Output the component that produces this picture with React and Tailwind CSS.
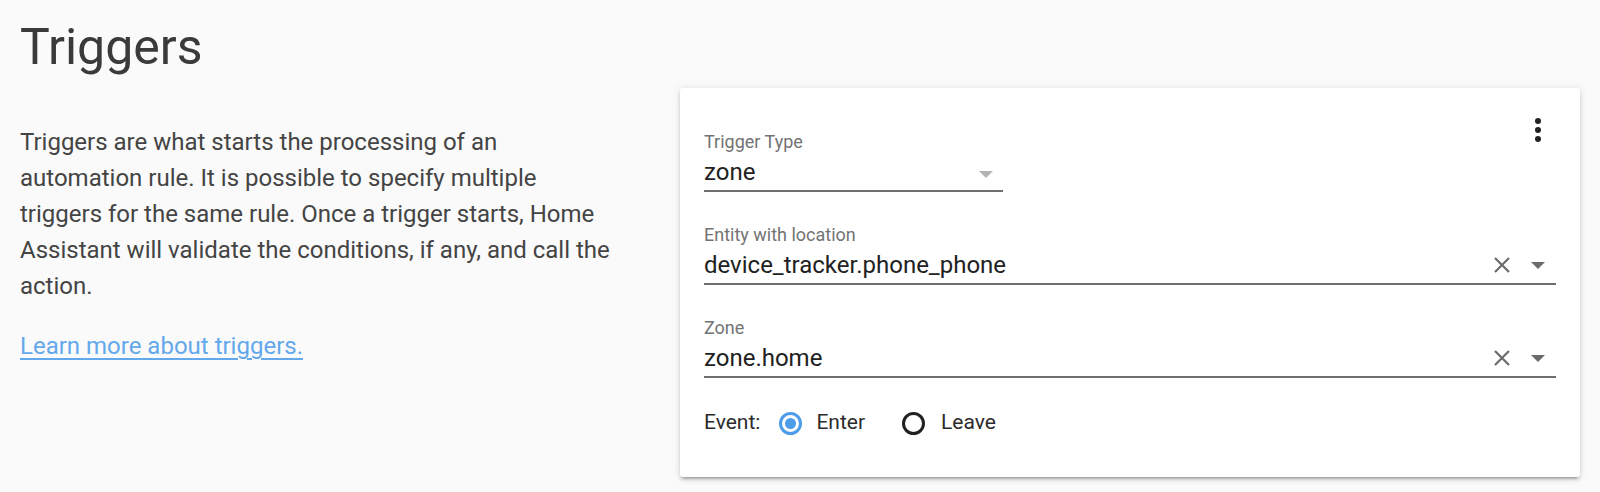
export default function App() {
  return (
    <div className="min-h-[492px] w-[1600px] bg-[#fafafa] font-['Roboto',sans-serif]">
      <div className="px-[20px] pt-[17px]">
        <h1 className="text-[50px] leading-[60px] font-normal text-[#3a3a3a]">Triggers</h1>
        <div className="mt-[11px] flex">
          <div className="w-[600px] mr-[60px] shrink-0 pt-[36px] text-[24px] leading-[36px] text-[#444444]">
            <p>
              Triggers are what starts the processing of an automation rule. It is possible to specify multiple triggers for the same rule. Once a trigger starts, Home Assistant will validate the conditions, if any, and call the action.
            </p>
            <p className="mt-[24px]">
              <a href="#" className="text-[#64a8ec] underline decoration-[1.5px] underline-offset-[4px]">Learn more about triggers.</a>
            </p>
          </div>
          <div className="relative w-[900px] rounded-[3px] bg-white px-[24px] pt-[42px] pb-[36px] shadow-[0_3px_3px_0_rgba(0,0,0,0.14),0_1px_8px_0_rgba(0,0,0,0.12),0_4px_2px_-3px_rgba(0,0,0,0.25)]">
            <button className="absolute right-[24px] top-[24px] flex h-[36px] w-[36px] items-center justify-center">
              <svg viewBox="0 0 36 36" width="36" height="36">
                <circle cx="18" cy="9" r="3" fill="#212121" />
                <circle cx="18" cy="18" r="3" fill="#212121" />
                <circle cx="18" cy="27" r="3" fill="#212121" />
              </svg>
            </button>

            <div className="w-[299px]">
              <div className="text-[18px] leading-[24px] text-[#737373]">Trigger Type</div>
              <div className="flex h-[36px] items-center border-b-2 border-[#6f6f6f] box-content">
                <span className="flex-1 text-[24px] text-[#212121]">zone</span>
                <svg width="14" height="7" viewBox="0 0 14 7" className="mr-[10px] mt-[4px]">
                  <path d="M0 0 L14 0 L7 7 Z" fill="#b3b3b3" />
                </svg>
              </div>
            </div>

            <div className="mt-[31px]">
              <div className="text-[18px] leading-[24px] text-[#737373]">Entity with location</div>
              <div className="flex h-[36px] items-center border-b-2 border-[#6f6f6f] box-content">
                <span className="flex-1 text-[24px] text-[#212121]">device_tracker.phone_phone</span>
                <ClearIcon />
                <ArrowIcon />
              </div>
            </div>

            <div className="mt-[31px]">
              <div className="text-[18px] leading-[24px] text-[#737373]">Zone</div>
              <div className="flex h-[36px] items-center border-b-2 border-[#6f6f6f] box-content">
                <span className="flex-1 text-[24px] text-[#212121]">zone.home</span>
                <ClearIcon />
                <ArrowIcon />
              </div>
            </div>

            <div className="mt-[27px] flex h-[36px] items-center text-[21px] text-[#2b2b2b]">
              <span>Event:</span>
              <div className="ml-[19px] flex items-center">
                <span className="flex h-[23px] w-[23px] items-center justify-center rounded-full border-[3px] border-[#4c9ce9]">
                  <span className="h-[11px] w-[11px] rounded-full bg-[#4c9ce9]" />
                </span>
                <span className="ml-[14px]">Enter</span>
              </div>
              <div className="ml-[37px] flex items-center">
                <span className="h-[23px] w-[23px] rounded-full border-[3px] border-[#212121]" />
                <span className="ml-[16px]">Leave</span>
              </div>
            </div>
          </div>
        </div>
      </div>
    </div>
  );
}

function ClearIcon() {
  return (
    <span className="flex h-[36px] w-[36px] items-center justify-center">
      <svg width="18" height="18" viewBox="0 0 18 18">
        <path d="M2 2 L16 16 M16 2 L2 16" stroke="#6b6b6b" strokeWidth="2.2" />
      </svg>
    </span>
  );
}

function ArrowIcon() {
  return (
    <span className="flex h-[36px] w-[36px] items-center justify-center">
      <svg width="14" height="7" viewBox="0 0 14 7">
        <path d="M0 0 L14 0 L7 7 Z" fill="#6b6b6b" />
      </svg>
    </span>
  );
}
